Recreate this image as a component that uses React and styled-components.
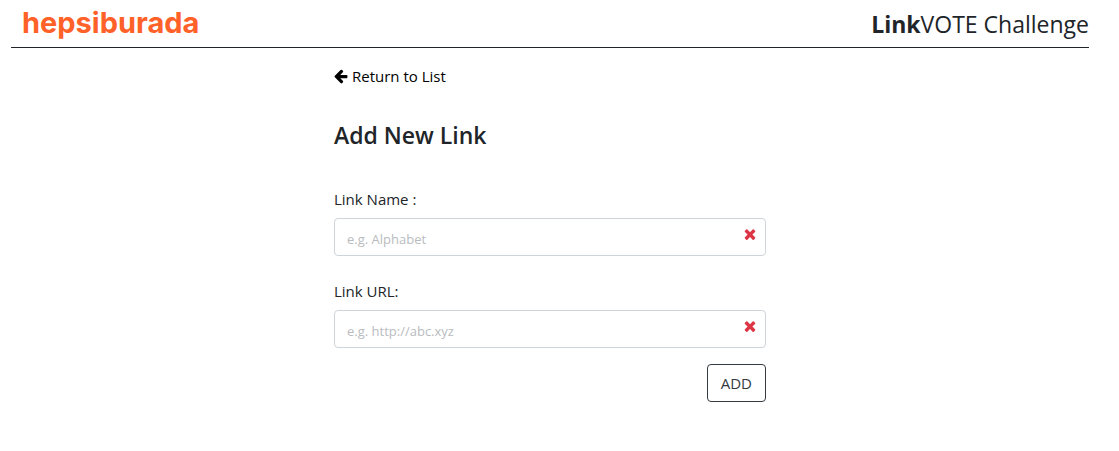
import React from "react";
import styled, { createGlobalStyle } from "styled-components";

const GlobalStyle = createGlobalStyle`
  *, *::before, *::after { box-sizing: border-box; }
  body {
    margin: 0;
    background: #fff;
    color: #212529;
    font-family: "Open Sans", "Noto Sans", sans-serif;
    font-size: 15px;
    line-height: 24px;
  }
`;

const Page = styled.div`
  padding: 0 30px 0 11px;
`;

const Header = styled.header`
  display: flex;
  align-items: center;
  justify-content: space-between;
  height: 48px;
  padding-left: 11px;
  border-bottom: 1px solid #212529;
`;

const Logo = styled.a`
  padding-bottom: 2px;
  color: #ff6129;
  font-family: Inter, sans-serif;
  font-size: 29px;
  font-weight: 700;
  line-height: 44px;
  text-decoration: none;
`;

const Brand = styled.div`
  font-size: 23px;
  font-weight: 400;
  line-height: 48px;

  strong { font-weight: 700; }
`;

const Main = styled.main`
  max-width: 432px;
  margin: 0 auto;
  padding-top: 16px;
`;

const BackLink = styled.a`
  display: inline-flex;
  align-items: center;
  gap: 4px;
  color: #000;
  text-decoration: none;
`;

const Title = styled.h1`
  margin: 29px 0 36px;
  font-size: 23px;
  font-weight: 600;
  line-height: 32px;
`;

const Form = styled.form`
  display: flex;
  flex-direction: column;
`;

const Field = styled.div`
  display: flex;
  flex-direction: column;
  gap: 7px;
  margin-bottom: ${(p) => (p.$last ? "16px" : "23px")};
`;

const InputBox = styled.div`
  display: flex;
  height: 38px;
  border: 1px solid #ced4da;
  border-radius: 4px;
`;

const Input = styled.input`
  flex: 1;
  min-width: 0;
  padding: 6px 12px 2px;
  border: 0;
  border-radius: 4px;
  background: transparent;
  color: #495057;
  font: inherit;
  font-size: 13px;

  &::placeholder { color: #b9bcbf; opacity: 1; }
`;

const ClearButton = styled.button`
  display: flex;
  align-items: center;
  padding: 0 7px 6px;
  border: 0;
  background: transparent;
  color: #dc3545;
  cursor: pointer;
`;

const AddButton = styled.button`
  align-self: flex-end;
  height: 38px;
  padding: 0 13px;
  border: 1px solid #343a40;
  border-radius: 4px;
  background: transparent;
  color: #343a40;
  font: inherit;
  cursor: pointer;
`;

const ArrowIcon = () => (
  <svg width="14" height="16" viewBox="128 0 1600 1792" fill="currentColor" aria-hidden="true">
    <path d="M1664 896v128q0 53-32.5 90.5t-84.5 37.5h-704l293 294q38 36 38 90t-38 90l-75 76q-37 37-90 37-52 0-91-37l-651-652q-37-37-37-90 0-52 37-91l651-650q38-38 91-38 52 0 90 38l75 74q38 38 38 91t-38 91l-293 293h704q52 0 84.5 37.5t32.5 90.5z" />
  </svg>
);

const TimesIcon = () => (
  <svg width="16" height="16" viewBox="0 0 1792 1792" fill="currentColor" aria-hidden="true">
    <path d="M1490 1322q0 40-28 68l-136 136q-28 28-68 28t-68-28l-294-294-294 294q-28 28-68 28t-68-28l-136-136q-28-28-28-68t28-68l294-294-294-294q-28-28-28-68t28-68l136-136q28-28 68-28t68 28l294 294 294-294q28-28 68-28t68 28l136 136q28 28 28 68t-28 68l-294 294 294 294q28 28 28 68z" />
  </svg>
);

function LinkField({ id, label, placeholder, last }) {
  return (
    <Field $last={last}>
      <label htmlFor={id}>{label}</label>
      <InputBox>
        <Input id={id} name={id} type="text" placeholder={placeholder} />
        <ClearButton type="reset" aria-label="Clear">
          <TimesIcon />
        </ClearButton>
      </InputBox>
    </Field>
  );
}

export default function App() {
  return (
    <>
      <GlobalStyle />
      <Page>
        <Header>
          <Logo href="#">hepsiburada</Logo>
          <Brand>
            <strong>Link</strong>VOTE Challenge
          </Brand>
        </Header>
        <Main>
          <BackLink href="#">
            <ArrowIcon />
            Return to List
          </BackLink>
          <Title>Add New Link</Title>
          <Form onSubmit={(e) => e.preventDefault()}>
            <LinkField id="name" label="Link Name :" placeholder="e.g. Alphabet" />
            <LinkField id="url" label="Link URL:" placeholder="e.g. http://abc.xyz" last />
            <AddButton type="submit">ADD</AddButton>
          </Form>
        </Main>
      </Page>
    </>
  );
}
